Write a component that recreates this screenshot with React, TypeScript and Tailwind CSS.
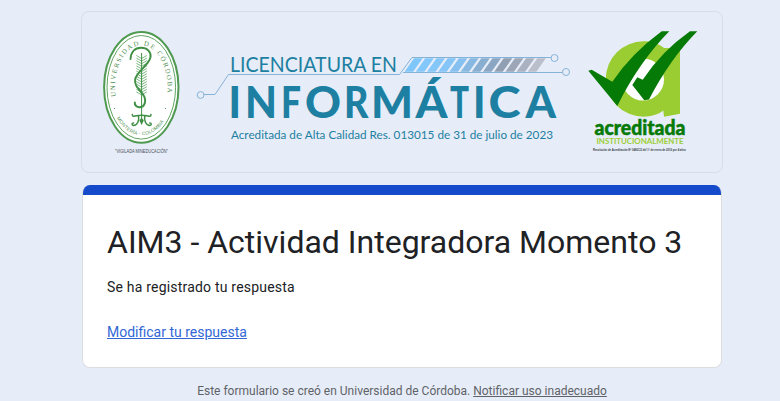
const chevrons = Array.from({ length: 15 }, (_, i) => 57 + i * 2.6);
const stripes = Array.from({ length: 12 }, (_, i) => 404.6 + i * 11.2);
const stripeColors = [
  '#7fc6fb', '#84c8fb', '#86c7fa', '#86c5f8', '#85c0f0', '#86b8e2',
  '#88aed0', '#8aa6c2', '#909fb2', '#9ca6b6', '#aab1c0', '#bbbfcb',
];

// Each letter of the wordmark with its left edge and advance width.
const wordmark: [string, number, number][] = [
  ['I', 228.5, 12.5],
  ['N', 245, 32],
  ['F', 281, 20],
  ['O', 305, 36],
  ['R', 344, 24.5],
  ['M', 371, 42],
  ['Á', 415.5, 32],
  ['T', 450, 19],
  ['I', 473, 12.5],
  ['C', 488.5, 32],
  ['A', 525.5, 30.5],
];

function UniversitySeal() {
  return (
    <svg className="h-[135px] w-[84px] shrink-0 overflow-visible" viewBox="100 25 84 135" role="img">
      <defs>
        <path id="sealTop" d="M115.700 96.500A26.300 41.600 0 1 1 166.900 96.500" />
        <path id="sealBottom" d="M116.800 118A32 48 0 0 0 166 118" />
      </defs>
      <ellipse cx="141.3" cy="87.3" rx="37.2" ry="55.4" fill="#fff" stroke="#4f9a50" strokeWidth="2" />
      <ellipse cx="141.3" cy="87.3" rx="34.3" ry="51.8" fill="none" stroke="#5fa560" strokeWidth="1" />
      <text fontFamily="'Liberation Serif', serif" fontSize="6.8" fill="#4d8f50">
        <textPath href="#sealTop" textLength="123">UNIVERSIDAD DE CÓRDOBA</textPath>
      </text>
      <text fontFamily="'Liberation Sans', sans-serif" fontSize="4.8" fill="#4d8f50">
        <textPath href="#sealBottom" textLength="59">MONTERÍA - COLOMBIA</textPath>
      </text>
      <circle cx="114.5" cy="108.5" r="0.6" fill="#4d8f50" />
      <circle cx="165.5" cy="108.5" r="0.6" fill="#4d8f50" />
      <g fill="none" stroke="#6fb074" strokeWidth="0.9">
        {chevrons.map((y) => (
          <path key={y} d={`M136.400 ${y - 1.5}L141.600 ${y + 1.5}L146.800 ${y - 1.5}`} />
        ))}
      </g>
      <path d="M141.600 53V118" stroke="#3f8f45" strokeWidth="1" />
      <path
        d="M130.500 59C131 52 135 47.800 141 47.800C147.500 47.800 151.500 52 150.400 57.500C149 64.500 137 72 135.200 79C133.500 87 142 91 144.500 97C146.500 103 143.500 107.500 139.500 107.300C136.500 107 134.500 105 134.800 102.500"
        fill="none" stroke="#3f8f45" strokeWidth="1.9" strokeLinecap="round"
      />
      <path
        d="M132.300 114.500C132.300 117 134 116.200 136 115.800Q141.600 114.800 147 115.800C149 116.200 151 117 151 114.500M138.500 116.200C139.500 120 137.500 125.500 133.500 125.500C131.500 125 131.800 122.800 133.500 123M144.800 116.200C143.800 120 145.800 125.500 149.800 125.500C151.800 125 151.500 122.800 149.800 123"
        fill="none" stroke="#3f8f45" strokeWidth="1.5" strokeLinecap="round"
      />
      <path d="M141.600 117.500L143.800 120.500L141.600 125L139.400 120.500Z" fill="#3f8f45" />
      <text x="115" y="153" textLength="53" lengthAdjust="spacingAndGlyphs" fontFamily="'Liberation Sans', sans-serif" fontSize="5.4" fill="#444b55">
        "VIGILADA MINEDUCACIÓN"
      </text>
    </svg>
  );
}

function ProgramTitle() {
  return (
    <svg className="h-[110px] w-[384px] shrink-0 overflow-visible" viewBox="192 40 384 110" role="img">
      <g fill="none" stroke="#86b2d8" strokeWidth="1">
        <circle cx="200.600" cy="95" r="3.400" />
        <path d="M204 94.500H215L228.500 74.500H399.500L412 57.500H551" />
        <path d="M403 72.500H562.500" />
        <circle cx="554.500" cy="58" r="3.500" />
        <circle cx="566" cy="72" r="3.500" />
      </g>
      {stripes.map((x, i) => (
        <path key={x} d={`M${x} 71.700L${x + 9.5} 58.300H${x + 18}L${x + 8.5} 71.700Z`} fill={stripeColors[i]} />
      ))}
      <g fill="#1d7fa1" fontFamily="Lato, sans-serif">
        <text x="230" y="71.500" fontSize="20.500" textLength="167" lengthAdjust="spacingAndGlyphs">LICENCIATURA EN</text>
        <text y="117.500" fontSize="43" fontWeight="900">
          {wordmark.map(([letter, x, width]) => (
            <tspan key={x} x={x} textLength={width} lengthAdjust="spacingAndGlyphs">{letter}</tspan>
          ))}
        </text>
        <text x="231" y="139" fontSize="11.800" textLength="322" lengthAdjust="spacingAndGlyphs">
          Acreditada de Alta Calidad Res. 013015 de 31 de julio de 2023
        </text>
      </g>
    </svg>
  );
}

function AccreditationLogo() {
  return (
    <svg className="h-[135px] w-[120px] shrink-0 overflow-visible" viewBox="584 25 120 135" role="img">
      <path d="M643.500 41.300C652 41.300 659 44 664 48H680V113.700L664 116.700L663.300 110.500C658 114.500 651 116.700 643.500 116.700A37.700 37.700 0 0 1 643.500 41.300Z" fill="#9acd32" />
      <circle cx="643" cy="79.500" r="21" fill="#fff" />
      <path d="M588.300 70.700L591.700 69.700L612.300 81.700Q632 53 661.700 31.300H669.300Q639 62 617.300 106Z" fill="#067a06" />
      <path d="M632.300 85L637.300 77.300L642.700 79.700Q662 51 690 31.300H697.300Q670 59 649 99.500L644.300 100.300Z" fill="#067a06" />
      <text x="594.500" y="135" textLength="91" lengthAdjust="spacingAndGlyphs" fontFamily="Lato, sans-serif" fontWeight="900" fontSize="20" fill="#067a06" stroke="#067a06" strokeWidth="0.5">acreditada</text>
      <text x="596.500" y="143.500" textLength="87" lengthAdjust="spacingAndGlyphs" fontFamily="Lato, sans-serif" fontWeight="700" fontSize="8" fill="#9acd32">INSTITUCIONALMENTE</text>
      <text x="593" y="151" textLength="93" lengthAdjust="spacingAndGlyphs" fontFamily="'Liberation Sans', sans-serif" fontWeight="700" fontSize="3.800" fill="#333b44">
        Resolución de Acreditación N° 0480C/2 del 1° de enero de 2019 por 4 años
      </text>
    </svg>
  );
}

export default function App() {
  return (
    <main className="h-[401px] w-[780px] overflow-hidden bg-[#e7edf8] pl-[81px] pt-[11px] font-[Roboto,sans-serif]">
      <header className="flex h-[162px] w-[642px] rounded-lg border border-[#d8dde7] pt-[13px] pl-[18px]">
        <UniversitySeal />
        <div className="ml-2 mt-[15px]">
          <ProgramTitle />
        </div>
        <div className="ml-2">
          <AccreditationLogo />
        </div>
      </header>
      <section className="ml-px mt-3 h-[183px] w-[640px] overflow-hidden rounded-lg border-x border-b border-[#dadce0] bg-white">
        <div className="-mx-px h-[10px] bg-[#154acb]" />
        <div className="px-6 pt-[27px] text-[#202124]">
          <h1 className="whitespace-nowrap text-[32px] leading-[40px]">AIM3 - Actividad Integradora Momento 3</h1>
          <p className="mt-[15px] text-[14px] leading-5 tracking-[0.2px]">Se ha registrado tu respuesta</p>
          <a className="mt-[25px] block w-fit text-[14px] leading-5 text-[#3367d6] underline" href="#">Modificar tu respuesta</a>
        </div>
      </section>
      <footer className="mt-[15px] w-[642px] whitespace-nowrap text-center text-[12px] leading-4 text-[#5f6368]">
        Este formulario se creó en Universidad de Córdoba. <a className="underline" href="#">Notificar uso inadecuado</a>
      </footer>
    </main>
  );
}
